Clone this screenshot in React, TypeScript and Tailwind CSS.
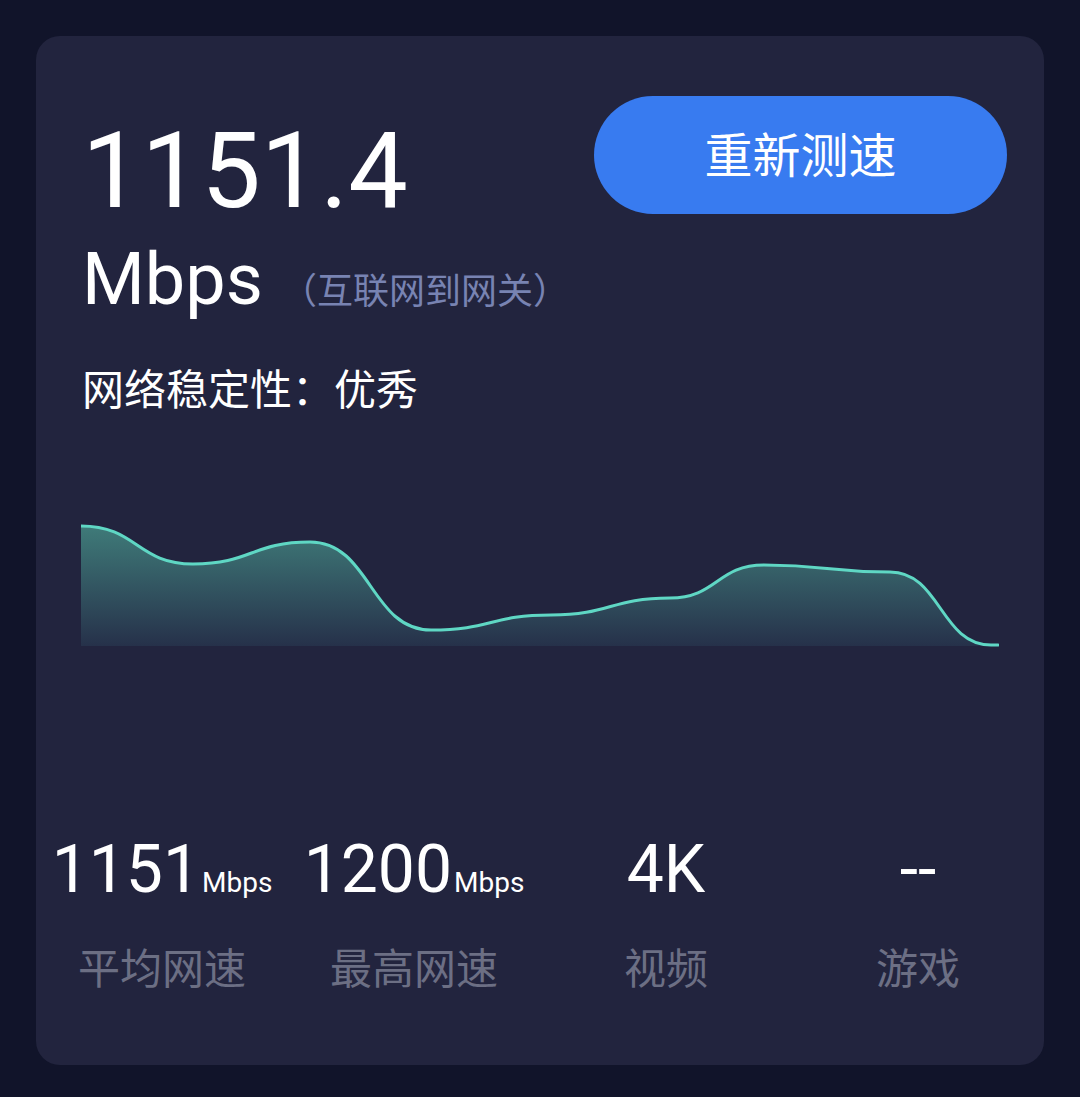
import React from "react";

const latin = { fontFamily: "Roboto, 'Noto Sans CJK SC', sans-serif" };

// key points of the curve (x, y) inside the chart box (918 x 127); each one is a flat turn
const points: [number, number][] = [
  [0, 5], [112, 43], [229, 21], [350, 109], [470, 94], [589, 77], [683, 44], [809, 51], [910, 124],
];

function smoothPath(pts: [number, number][]) {
  let d = `M ${pts[0][0]} ${pts[0][1]}`;
  for (let i = 0; i < pts.length - 1; i++) {
    const [x1, y1] = pts[i];
    const [x2, y2] = pts[i + 1];
    const dx = (x2 - x1) * 0.5;
    d += ` C ${x1 + dx} ${y1} ${x2 - dx} ${y2} ${x2} ${y2}`;
  }
  return d + " L 917 124";
}

function SpeedChart() {
  const line = smoothPath(points);
  const area = `${line} L 917 125 L 0 125 Z`;
  return (
    <svg width="918" height="127" viewBox="0 0 918 127" className="block">
      <defs>
        <linearGradient id="fillGrad" x1="0" y1="0" x2="0" y2="125" gradientUnits="userSpaceOnUse">
          <stop offset="0" stopColor="#407e7b" />
          <stop offset="1" stopColor="#26314a" />
        </linearGradient>
      </defs>
      <path d={area} fill="url(#fillGrad)" />
      <path d={line} fill="none" stroke="#5fd7c4" strokeWidth="3" strokeLinecap="round" />
    </svg>
  );
}

function Stat({ value, unit, label }: { value: string; unit?: string; label: string }) {
  return (
    <div className="flex flex-col items-center">
      <div className="flex items-baseline text-white" style={latin}>
        <span className="text-[66px] leading-none">{value}</span>
        {unit && <span className="text-[28px] leading-none ml-[2px]">{unit}</span>}
      </div>
      <div className="mt-[46px] text-[42px] leading-none text-[#6c6f84]">{label}</div>
    </div>
  );
}

export default function App() {
  return (
    <div
      className="w-[1080px] h-[1097px] bg-[#11142a] pt-[36px] px-[36px]"
      style={{ fontFamily: "Roboto, 'Noto Sans CJK SC', sans-serif" }}
    >
      <div className="h-[1029px] rounded-[24px] bg-[#22243e] pt-[60px]">
        {/* header */}
        <div className="flex justify-between pl-[46px] pr-[37px]">
          <div className="pt-[22px]">
            <div className="text-[106px] leading-none text-white" style={latin}>
              1151.4
            </div>
            <div className="mt-[20px] flex items-baseline">
              <span className="text-[72px] leading-none text-white" style={latin}>
                Mbps
              </span>
              <span className="ml-[18px] text-[36px] leading-none text-[#7883b2] [text-spacing-trim:space-all]">
                （互联网到网关）
              </span>
            </div>
          </div>
          <button className="w-[413px] h-[118px] rounded-full bg-[#387bf0] text-white text-[48px] leading-none pt-[4px]">
            重新测速
          </button>
        </div>

        <div className="mt-[54px] pl-[46px] text-[42px] leading-none text-white">网络稳定性：优秀</div>

        <div className="mt-[109px] pl-[45px]">
          <SpeedChart />
        </div>

        {/* stats */}
        <div className="mt-[189px] grid grid-cols-4">
          <Stat value="1151" unit="Mbps" label="平均网速" />
          <Stat value="1200" unit="Mbps" label="最高网速" />
          <Stat value="4K" label="视频" />
          <Stat value="--" label="游戏" />
        </div>
      </div>
    </div>
  );
}
